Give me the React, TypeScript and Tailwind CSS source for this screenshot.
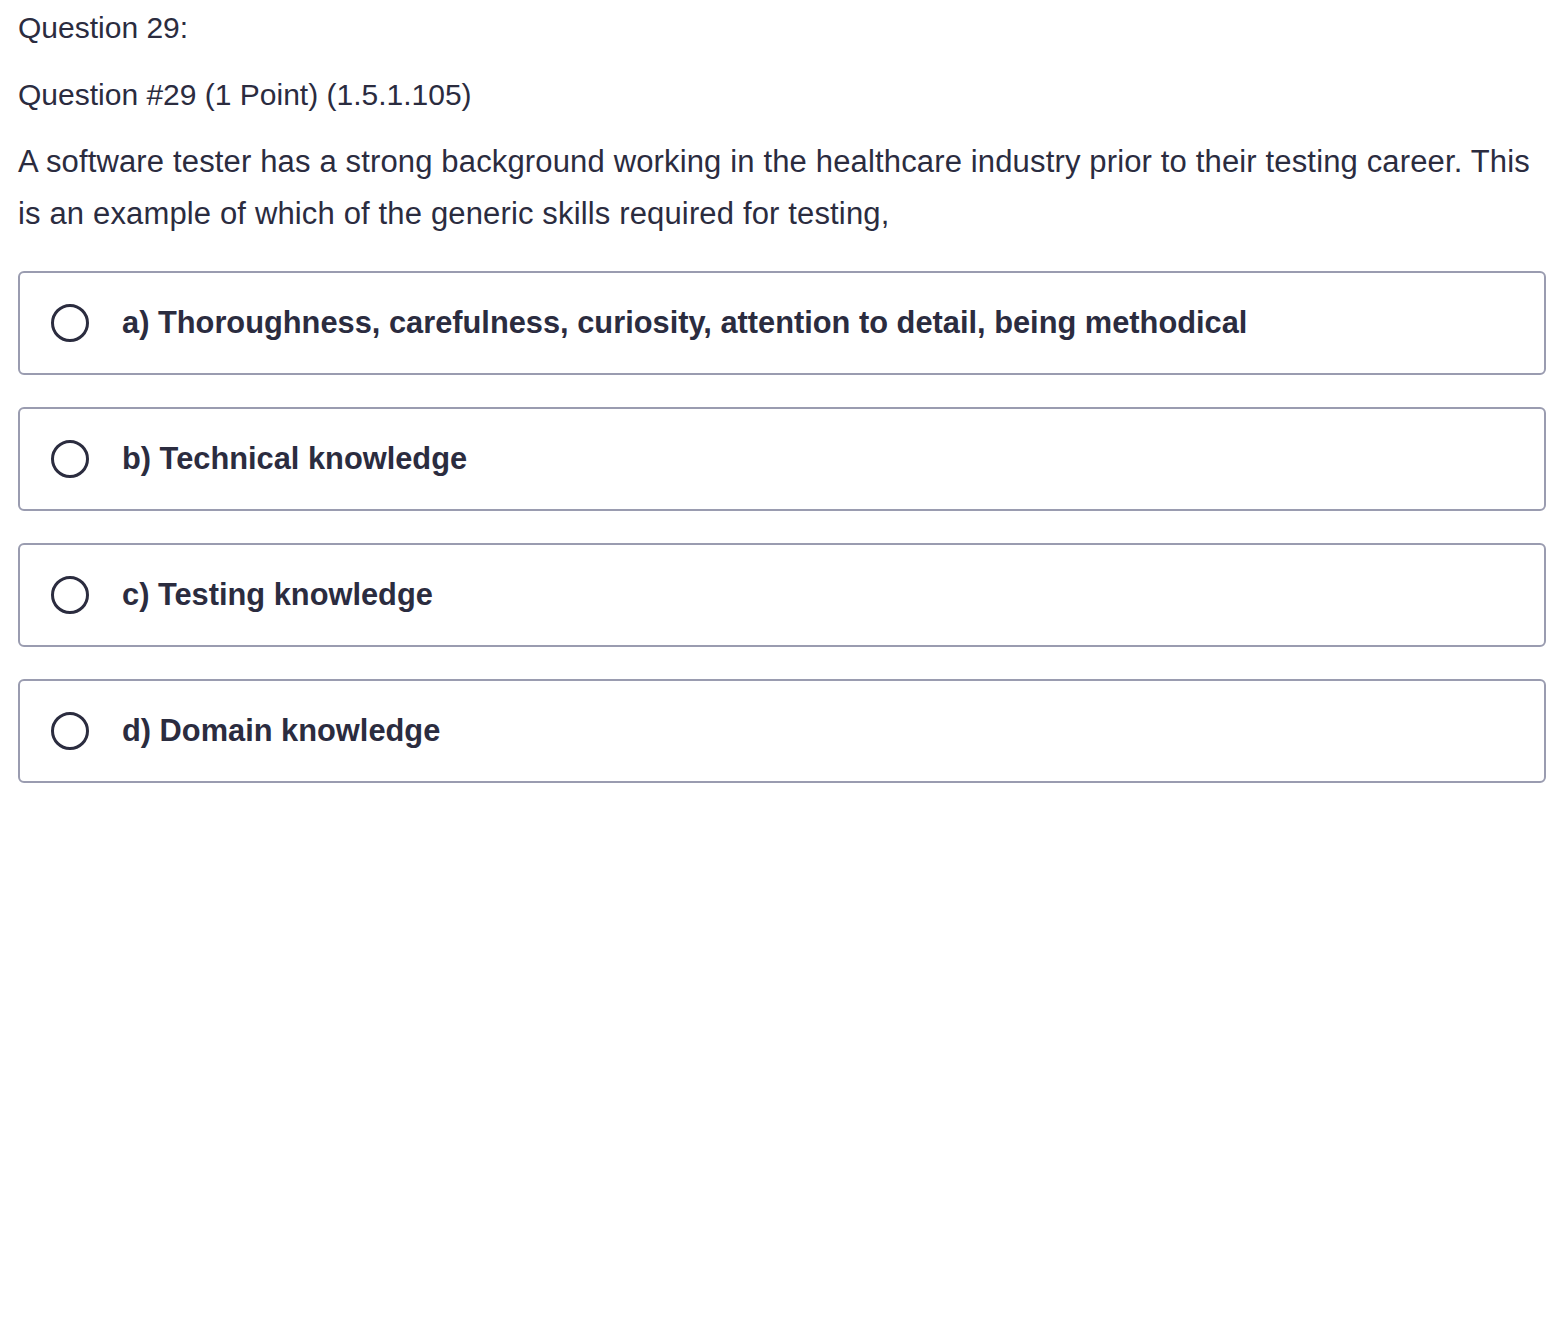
const options = [
  'a) Thoroughness, carefulness, curiosity, attention to detail, being methodical',
  'b) Technical knowledge',
  'c) Testing knowledge',
  'd) Domain knowledge',
];

export default function App() {
  return (
    <div className="min-h-screen bg-white pl-[18px] pr-[20px] text-[#2b2c3f]" style={{ fontFamily: '"Liberation Sans", Arial, sans-serif' }}>
      <div className="pt-[10px] text-[30px] leading-[36px]">Question 29:</div>
      <div className="mt-[31px] text-[30px] leading-[36px]">Question #29 (1 Point) (1.5.1.105)</div>
      <p className="mt-[23px] text-[31px] leading-[52px] tracking-[0.15px]">
        A software tester has a strong background working in the healthcare industry prior to their testing career. This is an example of which of the generic skills required for testing,
      </p>
      <div className="mt-[31px] flex flex-col gap-[32px]">
        {options.map((o) => (
          <label key={o} className="flex h-[104px] items-center rounded-[6px] border-2 border-[#9a9cb0] pl-[31px]">
            <span className="h-[38px] w-[38px] shrink-0 rounded-full border-[3.5px] border-[#2b2c3f]" />
            <span className="ml-[33px] text-[30.8px] font-bold">{o}</span>
          </label>
        ))}
      </div>
    </div>
  );
}
